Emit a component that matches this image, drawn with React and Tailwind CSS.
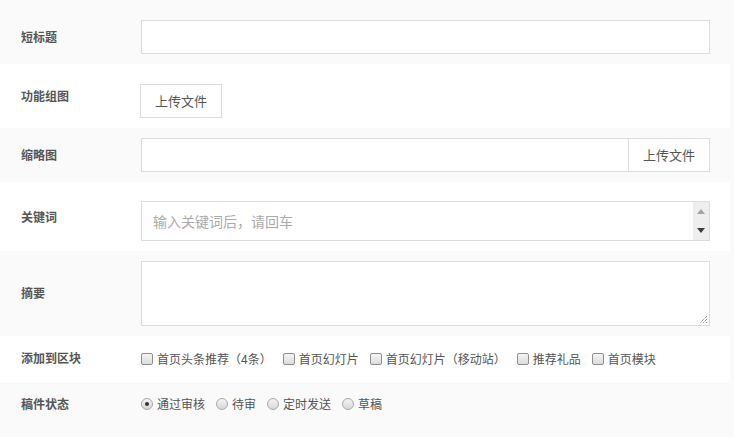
import React from 'react';

const font = { fontFamily: '"Microsoft YaHei", "Noto Sans CJK SC", "Liberation Sans", sans-serif' };

// Old-style native checkbox
const Check = () => (
  <span className="inline-block w-[12px] h-[12px] rounded-[2px] border border-[#8f8f8f] bg-gradient-to-b from-[#f4f4f4] to-[#dcdcdc] shrink-0" />
);

// Native-looking radio button
const Radio = ({ checked }) => (
  <span className="w-[12px] h-[12px] rounded-full border border-[#a8a8a8] bg-gradient-to-b from-[#f4f4f4] to-[#d8d8d8] flex items-center justify-center shrink-0">
    {checked && <span className="w-[4px] h-[4px] rounded-full bg-[#333]" />}
  </span>
);

const Row = ({ label, bg, height, labelTop, children, contentClass = '' }) => (
  <div className={`flex ${bg} w-[730px]`} style={{ height }}>
    <div className="w-[141px] shrink-0 pl-[21px] text-[12px] font-bold text-[#555] leading-[16px]" style={{ paddingTop: labelTop }}>
      {label}
    </div>
    <div className={`w-[569px] ${contentClass}`}>{children}</div>
  </div>
);

export default function App() {
  const blocks = ['首页头条推荐（4条）', '首页幻灯片', '首页幻灯片（移动站）', '推荐礼品', '首页模块'];
  const states = ['通过审核', '待审', '定时发送', '草稿'];

  return (
    <div className="w-[734px] h-[437px] bg-[#fafafa] overflow-hidden" style={font}>
      <Row label="短标题" bg="bg-[#fafafa]" height={64} labelTop={29} contentClass="pt-[20px]">
        <div className="h-[34px] border border-[#dcdcdc] bg-white" />
      </Row>

      <Row label="功能组图" bg="bg-white" height={64} labelTop={24} contentClass="pt-[20px]">
        <button className="h-[34px] w-[82px] -ml-px border border-[#dcdcdc] bg-white text-[13px] text-[#555]">上传文件</button>
      </Row>

      <Row label="缩略图" bg="bg-[#fafafa]" height={54} labelTop={19} contentClass="pt-[10px]">
        <div className="h-[34px] flex border border-[#dcdcdc] bg-white">
          <div className="flex-1" />
          <div className="w-[81px] border-l border-[#dcdcdc] flex items-center justify-center text-[13px] text-[#555]">上传文件</div>
        </div>
      </Row>

      <Row label="关键词" bg="bg-white" height={69} labelTop={27} contentClass="pt-[19px]">
        <div className="h-[40px] flex border border-[#dcdcdc] bg-white">
          <div className="flex-1 pl-[11px] flex items-center text-[14px] text-[#aaa]">输入关键词后，请回车</div>
          <div className="w-[16px] bg-[#eeeeee] flex flex-col items-center justify-between py-[7px]">
            <svg width="8" height="5" viewBox="0 0 8 5"><path d="M4 0L8 5H0z" fill="#a3a3a3" /></svg>
            <svg width="8" height="5" viewBox="0 0 8 5"><path d="M0 0H8L4 5z" fill="#3c3c3c" /></svg>
          </div>
        </div>
      </Row>

      <Row label="摘要" bg="bg-[#fafafa]" height={85} labelTop={34} contentClass="pt-[10px]">
        <div className="relative h-[65px] border border-[#dcdcdc] bg-white">
          <svg className="absolute right-[1px] bottom-[1px]" width="9" height="9" viewBox="0 0 9 9">
            <path d="M8 1L1 8M8 4L4 8M8 7L7 8" stroke="#555" strokeWidth="1" strokeDasharray="1 1" />
          </svg>
        </div>
      </Row>

      <Row label="添加到区块" bg="bg-white" height={46} labelTop={14} contentClass="flex items-center">
        <div className="flex items-center text-[12px] text-[#555]">
          {blocks.map((b, i) => (
            <label key={i} className="flex items-center mr-[11px] leading-[16px]">
              <Check />
              <span className="ml-[4px]">{b}</span>
            </label>
          ))}
        </div>
      </Row>

      <Row label="稿件状态" bg="bg-[#fafafa]" height={55} labelTop={14} contentClass="pt-[14px]">
        <div className="flex items-center text-[12px] text-[#555] h-[16px]">
          {states.map((s, i) => (
            <label key={i} className="flex items-center mr-[11px] leading-[16px]">
              <Radio checked={i === 0} />
              <span className="ml-[4px]">{s}</span>
            </label>
          ))}
        </div>
      </Row>
    </div>
  );
}
